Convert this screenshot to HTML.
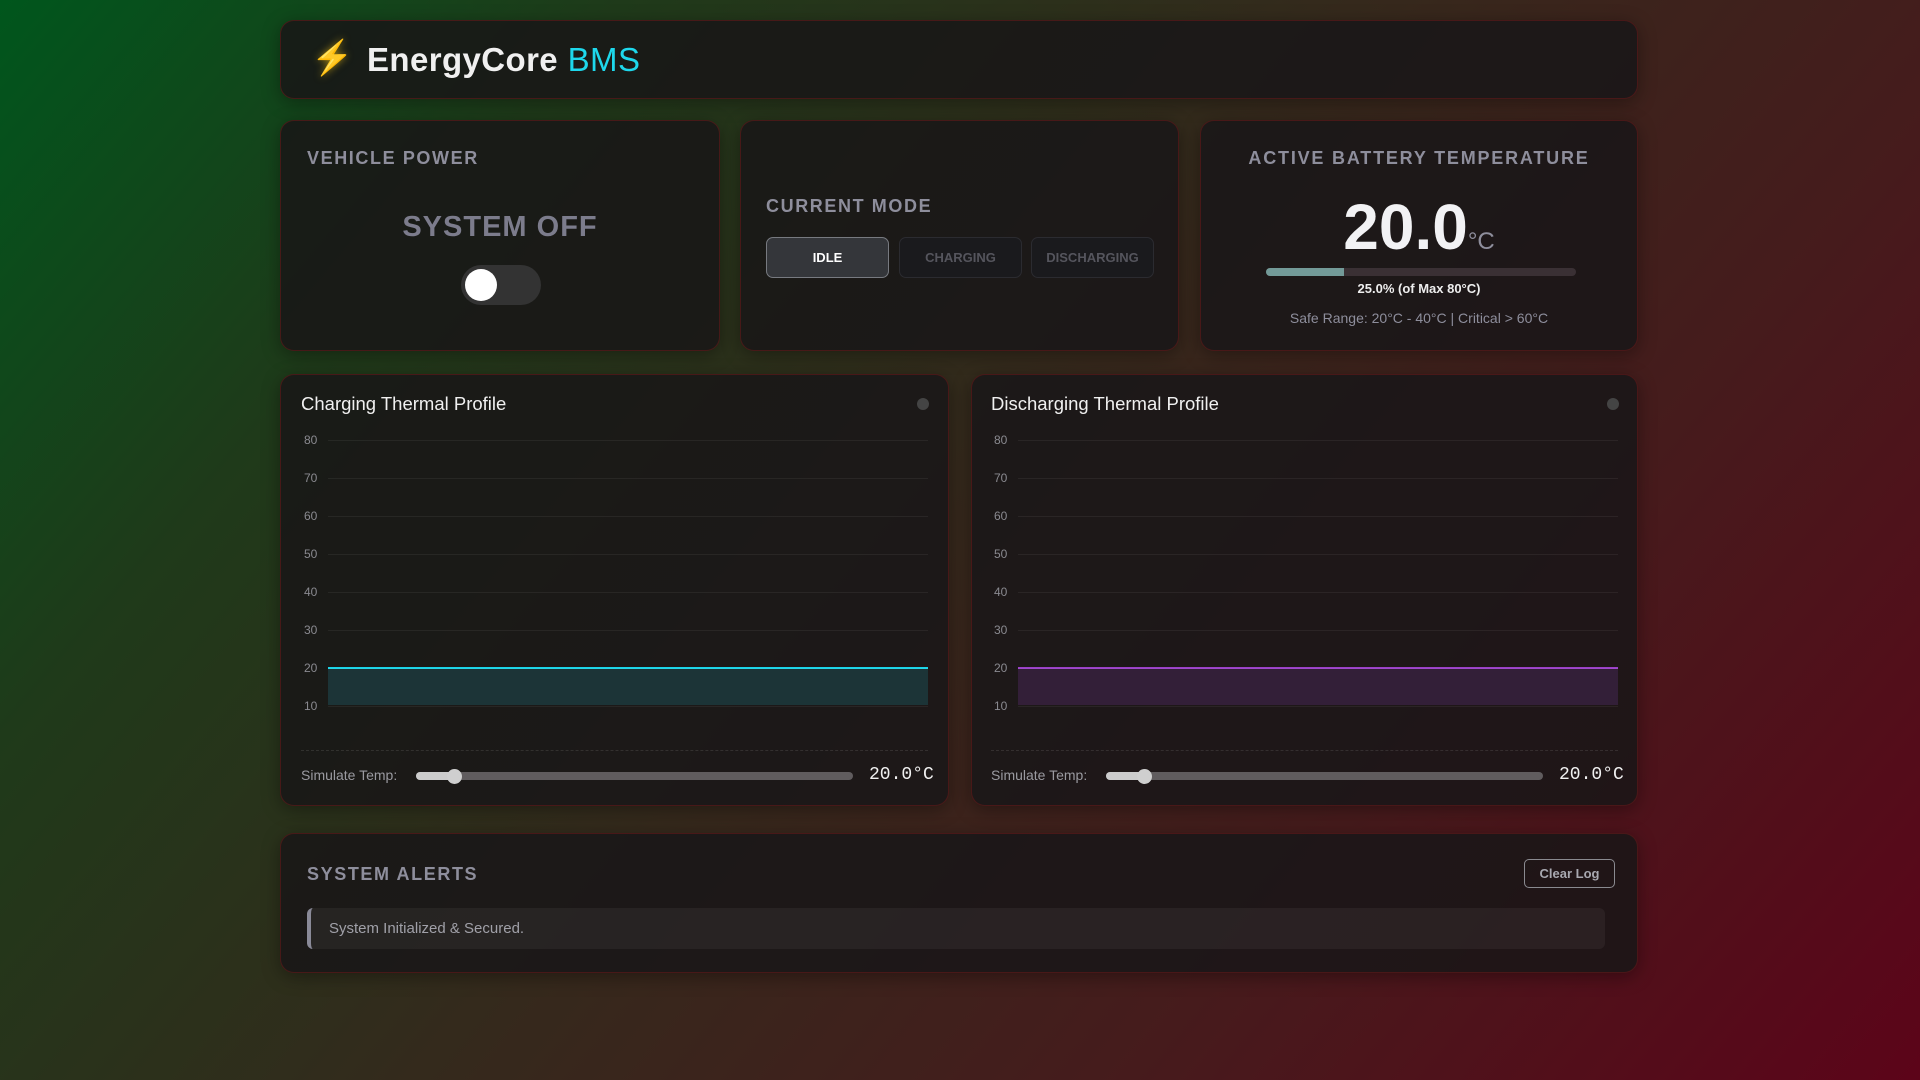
<!DOCTYPE html>
<html><head><meta charset="utf-8"><style>
*{box-sizing:border-box;margin:0;padding:0}
body{width:1920px;height:1080px;overflow:hidden;font-family:"Liberation Sans",sans-serif;background:linear-gradient(130deg,#00561c 0%,#1f3a1a 22%,#35291c 48%,#461b1c 72%,#5c0419 100%);position:relative;color:#fff}
div{white-space:nowrap}
.card{position:absolute;background:rgba(24,22,23,0.86);border:1px solid rgba(110,25,25,0.55);border-radius:14px;box-shadow:0 4px 18px rgba(0,0,0,0.35)}
.lbl{font-size:18px;font-weight:bold;letter-spacing:1.6px;color:#8e8e9c;position:absolute}
.btn{position:absolute;top:237px;height:41px;width:123px;border-radius:7px;font-size:13px;font-weight:bold;display:flex;align-items:center;justify-content:center;border:1px solid #2b2b30;color:#55555d;background:#1a1a1d}
.ylab{position:absolute;font-size:12px;color:#8a8a90;width:20px}
.grid{position:absolute;height:1px;background:rgba(255,255,255,0.06)}
</style></head><body>
<div class="card" style="left:280px;top:20px;width:1358px;height:79px">
 <div style="position:absolute;left:30px;top:17px;font-size:34px;color:#f5c518;text-shadow:0 0 8px rgba(245,197,24,.6)">⚡</div>
 <div style="position:absolute;left:86px;top:20px;font-size:33px;font-weight:bold;letter-spacing:0.4px;color:#f0f0f0">EnergyCore <span style="color:#1ed8ec;font-weight:normal">BMS</span></div>
</div>

<div class="card" style="left:280px;top:120px;width:440px;height:231px">
 <div class="lbl" style="left:26px;top:27px">VEHICLE POWER</div>
 <div style="position:absolute;left:0;width:100%;text-align:center;top:90px;font-size:29px;font-weight:bold;letter-spacing:1px;color:#7c7c8c">SYSTEM OFF</div>
 <div style="position:absolute;left:180px;top:144px;width:80px;height:40px;border-radius:20px;background:#333"><div style="position:absolute;left:4px;top:4px;width:32px;height:32px;border-radius:50%;background:#fff"></div></div>
</div>

<div class="card" style="left:740px;top:120px;width:439px;height:231px"></div>
<div class="lbl" style="left:766px;top:196px">CURRENT MODE</div>
<div class="btn" style="left:766px;background:#34363a;border-color:#777a80;color:#fff">IDLE</div>
<div class="btn" style="left:899px">CHARGING</div>
<div class="btn" style="left:1031px">DISCHARGING</div>

<div class="card" style="left:1200px;top:120px;width:438px;height:231px">
 <div class="lbl" style="left:0;width:100%;text-align:center;top:27px;letter-spacing:1.8px">ACTIVE BATTERY TEMPERATURE</div>
 <div style="position:absolute;left:0;width:100%;text-align:center;top:69px"><span style="font-size:64px;font-weight:bold;color:#f2f2f4">20.0</span><span style="font-size:24px;color:#8e8e9c">°C</span></div>
 <div style="position:absolute;left:65px;top:147px;width:310px;height:8px;border-radius:4px;background:#3a3034"><div style="width:25%;height:100%;border-radius:4px 0 0 4px;background:#739a98"></div></div>
 <div style="position:absolute;left:0;width:100%;text-align:center;top:160px;font-size:13px;font-weight:bold;color:#eee">25.0% (of Max 80°C)</div>
 <div style="position:absolute;left:0;width:100%;text-align:center;top:189px;font-size:14px;color:#8e8e9c">Safe Range: 20°C - 40°C | Critical &gt; 60°C</div>
</div>

<div class="card" style="left:280px;top:374px;width:669px;height:432px"></div>
<div class="card" style="left:971px;top:374px;width:667px;height:432px"></div>

<div style="position:absolute;left:0;top:0;width:1920px;height:1080px">
<div style="position:absolute;left:301px;top:393px;font-size:18.5px;color:#f0f0f0">Charging Thermal Profile</div>
<div style="position:absolute;left:917px;top:398px;width:12px;height:12px;border-radius:50%;background:#444"></div>
<div style="position:absolute;left:328px;top:668px;width:600px;height:37px;background:#1c3437"></div>
<div style="position:absolute;left:328px;top:667px;width:600px;height:2px;background:#18d4e8"></div>
<div style="position:absolute;left:301px;top:750px;width:627px;border-top:1px dashed rgba(255,255,255,0.1)"></div>
<div style="position:absolute;left:301px;top:767px;font-size:14px;color:#9a9aa0">Simulate Temp:</div>
<div style="position:absolute;left:416px;top:772px;width:437px;height:8px;border-radius:4px;background:#605c5e"><div style="width:40px;height:100%;border-radius:4px;background:#ccc"></div></div>
<div style="position:absolute;left:447px;top:769px;width:15px;height:15px;border-radius:50%;background:#cfcfcf"></div>
<div style="position:absolute;left:869px;top:765px;font-family:'Liberation Mono',monospace;font-size:18px;color:#f0f0f0">20.0°C</div>

<div style="position:absolute;left:991px;top:393px;font-size:18.5px;color:#f0f0f0">Discharging Thermal Profile</div>
<div style="position:absolute;left:1607px;top:398px;width:12px;height:12px;border-radius:50%;background:#444"></div>
<div style="position:absolute;left:1018px;top:668px;width:600px;height:37px;background:#331f38"></div>
<div style="position:absolute;left:1018px;top:667px;width:600px;height:2px;background:#9a3fc8"></div>
<div style="position:absolute;left:991px;top:750px;width:627px;border-top:1px dashed rgba(255,255,255,0.1)"></div>
<div style="position:absolute;left:991px;top:767px;font-size:14px;color:#9a9aa0">Simulate Temp:</div>
<div style="position:absolute;left:1106px;top:772px;width:437px;height:8px;border-radius:4px;background:#605c5e"><div style="width:40px;height:100%;border-radius:4px;background:#ccc"></div></div>
<div style="position:absolute;left:1137px;top:769px;width:15px;height:15px;border-radius:50%;background:#cfcfcf"></div>
<div style="position:absolute;left:1559px;top:765px;font-family:'Liberation Mono',monospace;font-size:18px;color:#f0f0f0">20.0°C</div>
</div>

<div id="axes"></div>
<script>
var h='';var vals=[80,70,60,50,40,30,20,10];
[[304,328],[994,1018]].forEach(function(p){vals.forEach(function(v,i){var y=440+i*38;
h+='<div class="ylab" style="left:'+p[0]+'px;top:'+(y-7)+'px">'+v+'</div>';
h+='<div class="grid" style="left:'+p[1]+'px;top:'+y+'px;width:600px"></div>';});});
document.getElementById('axes').innerHTML=h;
</script>

<div class="card" style="left:280px;top:833px;width:1358px;height:140px">
 <div class="lbl" style="left:26px;top:30px">SYSTEM ALERTS</div>
 <div style="position:absolute;left:1243px;top:25px;width:91px;height:29px;border:1px solid #8a8a90;border-radius:5px;font-size:13px;font-weight:bold;color:#a8a8b0;display:flex;align-items:center;justify-content:center">Clear Log</div>
 <div style="position:absolute;left:26px;top:74px;width:1298px;height:41px;border-radius:6px;background:rgba(255,255,255,0.05);border-left:4px solid #8a8a98"></div>
 <div style="position:absolute;left:48px;top:86px;font-size:15px;color:#a0a0a8">System Initialized &amp; Secured.</div>
</div>
</body></html>
